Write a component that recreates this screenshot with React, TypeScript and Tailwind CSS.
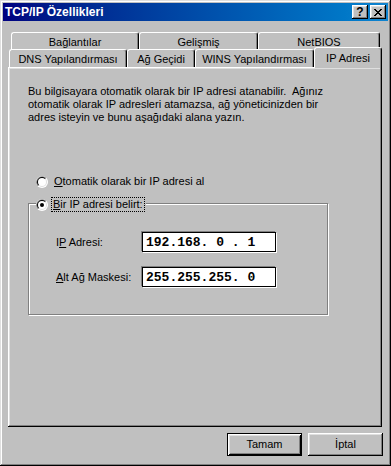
import React from "react";

const raised =
  "shadow-[inset_-1px_-1px_#000,inset_1px_1px_#fff,inset_-2px_-2px_#808080,inset_2px_2px_#dfdfdf]";

function Radio({ checked }: { checked?: boolean }) {
  return (
    <svg width="12" height="12" viewBox="0 0 12 12" className="shrink-0">
      <circle cx="6" cy="6" r="6" fill="#fff" />
      <path d="M1.76 10.24 A6 6 0 0 1 10.24 1.76 Z" fill="#808080" />
      <circle cx="6" cy="6" r="5" fill="#dfdfdf" />
      <path d="M2.46 9.54 A5 5 0 0 1 9.54 2.46 Z" fill="#000" />
      <circle cx="6" cy="6" r="4" fill="#fff" />
      {checked && <circle cx="6" cy="6" r="2" fill="#000" />}
    </svg>
  );
}

function Tab({ label, width, front }: { label: string; width: number; front?: boolean }) {
  return (
    <div
      style={{ width }}
      className={`flex h-[18px] shrink-0 justify-center rounded-t-[3px] border-l border-t border-r border-l-white border-t-white border-r-black bg-[#c0c0c0] pt-[3px] shadow-[inset_-1px_0_#808080] ${
        front ? "h-[17px] pt-[2px]" : ""
      }`}
    >
      {label}
    </div>
  );
}

function IpField({ value }: { value: string }) {
  return (
    <div className="flex h-[20px] w-[134px] items-center border border-black bg-white pl-[3px] shadow-[-1px_-1px_0_#808080,1px_1px_0_#fff]">
      <span className="whitespace-pre font-['Liberation_Mono',monospace] text-[13px] font-bold leading-none">
        {value}
      </span>
    </div>
  );
}

export default function App() {
  return (
    <div className="h-[466px] w-[391px] bg-[#c0c0c0] p-[3px] font-['Liberation_Sans',Arial,sans-serif] text-[11px] leading-[13px] text-black shadow-[inset_-1px_-1px_#000,inset_1px_1px_#dfdfdf,inset_-2px_-2px_#808080,inset_2px_2px_#fff]">
      {/* title bar */}
      <div className="flex h-[18px] items-center justify-between bg-gradient-to-r from-[#000080] to-[#1084d0] pl-[2px] pr-[2px]">
        <span className="text-[12px] font-bold text-white">TCP/IP Özellikleri</span>
        <div className="flex gap-[2px]">
          <div className={`flex h-[14px] w-[16px] items-center justify-center bg-[#c0c0c0] ${raised}`}>
            <span className="text-[12px] font-bold leading-none">?</span>
          </div>
          <div className={`flex h-[14px] w-[16px] items-center justify-center bg-[#c0c0c0] ${raised}`}>
            <svg width="8" height="7" viewBox="0 0 8 7">
              <path d="M0 0h2v1h1v1h2V1h1V0h2v1H7v1H6v1H5v1h1v1h1v1h1v1H6V6H5V5H3v1H2v1H0V6h1V5h1V4h1V3H2V2H1V1H0z" fill="#000" />
            </svg>
          </div>
        </div>
      </div>

      {/* tabs */}
      <div className="mt-[11px]">
        <div className="ml-[8px] flex">
          <Tab label="Bağlantılar" width={128} />
          <Tab label="Gelişmiş" width={119} />
          <Tab label="NetBIOS" width={122} />
        </div>
        <div className="ml-[6px] flex h-[17px] items-end">
          <Tab label="DNS Yapılandırması" width={118} front />
          <Tab label="Ağ Geçidi" width={68} front />
          <Tab label="WINS Yapılandırması" width={119} front />
          <div className="relative z-10 -mb-px flex h-[21px] w-[68px] shrink-0 justify-center rounded-t-[3px] border-l border-t border-r border-l-white border-t-white border-r-black bg-[#c0c0c0] pt-[4px] shadow-[inset_-1px_0_#808080]">
            IP Adresi
          </div>
        </div>
      </div>

      {/* panel */}
      <div className="ml-[5px] h-[360px] w-[374px] pl-[20px] pt-[18px] shadow-[inset_-1px_-1px_#000,inset_1px_1px_#fff,inset_-2px_-2px_#808080,inset_2px_2px_#dfdfdf]">
        <p>
          Bu bilgisayara otomatik olarak bir IP adresi atanabilir.&nbsp; Ağınız
          <br />
          otomatik olarak IP adresleri atamazsa, ağ yöneticinizden bir
          <br />
          adres isteyin ve bunu aşağıdaki alana yazın.
        </p>

        <div className="ml-[8px] mt-[51px] flex h-[13px] items-center gap-[6px]">
          <Radio />
          <span>
            <span className="underline">O</span>tomatik olarak bir IP adresi al
          </span>
        </div>

        <div className="relative mt-[15px] h-[112px] w-[300px] border border-[#808080] pl-[27px] pt-[28px] shadow-[inset_1px_1px_#fff,1px_1px_0_#fff]">
          <div className="absolute left-[7px] top-[-6px] flex items-center gap-[4px] bg-[#c0c0c0] pr-[2px]">
            <Radio checked />
            <span className="px-[1px] outline outline-1 outline-dotted outline-black">
              <span className="underline">B</span>ir IP adresi belirt:
            </span>
          </div>

          <div className="flex h-[20px] items-center">
            <span className="w-[86px]">
              I<span className="underline">P</span> Adresi:
            </span>
            <IpField value="192.168. 0 . 1" />
          </div>
          <div className="mt-[15px] flex h-[20px] items-center">
            <span className="w-[86px]">
              <span className="underline">A</span>lt Ağ Maskesi:
            </span>
            <IpField value="255.255.255. 0" />
          </div>
        </div>
      </div>

      {/* buttons */}
      <div className="mt-[6px] flex justify-end gap-[6px] pr-[5px]">
        <button className="flex h-[23px] w-[75px] items-center justify-center border border-black bg-[#c0c0c0] shadow-[inset_1px_1px_#fff,inset_-1px_-1px_#000,inset_2px_2px_#dfdfdf,inset_-2px_-2px_#808080]">
          Tamam
        </button>
        <button className={`flex h-[23px] w-[75px] items-center justify-center bg-[#c0c0c0] ${raised}`}>
          İptal
        </button>
      </div>
    </div>
  );
}
